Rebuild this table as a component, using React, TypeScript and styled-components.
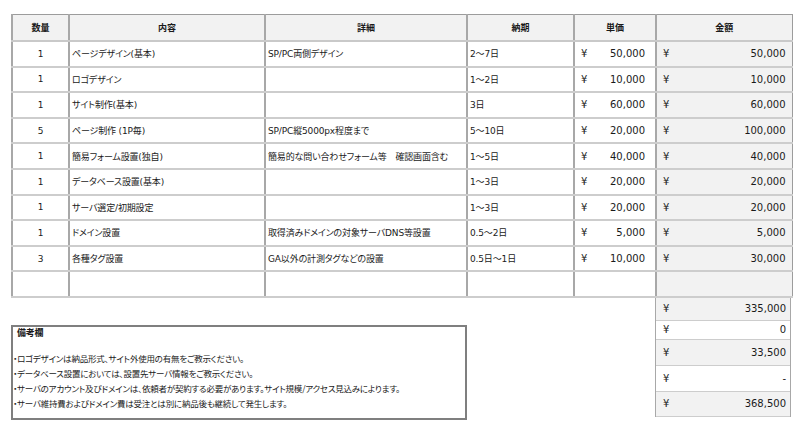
import React from "react";
import styled, { createGlobalStyle } from "styled-components";

const GlobalStyle = createGlobalStyle`
  html, body {
    margin: 0;
    padding: 0;
    background: #ffffff;
  }
  body {
    font-family: "DejaVu Sans", "Noto Sans CJK JP", sans-serif;
    color: #1a1a1a;
  }
`;

const rows = [
  { qty: "1", name: "ページデザイン(基本)", detail: "SP/PC両側デザイン", term: "2〜7日", price: "50,000", amount: "50,000" },
  { qty: "1", name: "ロゴデザイン", detail: "", term: "1〜2日", price: "10,000", amount: "10,000" },
  { qty: "1", name: "サイト制作(基本)", detail: "", term: "3日", price: "60,000", amount: "60,000" },
  { qty: "5", name: "ページ制作 (1P毎)", detail: "SP/PC縦5000px程度まで", term: "5〜10日", price: "20,000", amount: "100,000" },
  { qty: "1", name: "簡易フォーム設置(独自)", detail: "簡易的な問い合わせフォーム等　確認画面含む", term: "1〜5日", price: "40,000", amount: "40,000" },
  { qty: "1", name: "データベース設置(基本)", detail: "", term: "1〜3日", price: "20,000", amount: "20,000" },
  { qty: "1", name: "サーバ選定/初期設定", detail: "", term: "1〜3日", price: "20,000", amount: "20,000" },
  { qty: "1", name: "ドメイン設置", detail: "取得済みドメインの対象サーバDNS等設置", term: "0.5〜2日", price: "5,000", amount: "5,000" },
  { qty: "3", name: "各種タグ設置", detail: "GA以外の計測タグなどの設置", term: "0.5日〜1日", price: "10,000", amount: "30,000" },
  { qty: "", name: "", detail: "", term: "", price: "", amount: "" },
];

const totals = [
  { value: "335,000", height: 23, shade: true },
  { value: "0", height: 19, shade: false },
  { value: "33,500", height: 26, shade: true },
  { value: "-", height: 26, shade: false },
  { value: "368,500", height: 25, shade: true },
];

const notes = [
  "・ロゴデザインは納品形式、サイト外使用の有無をご教示ください。",
  "・データベース設置においては、設置先サーバ情報をご教示ください。",
  "・サーバのアカウント及びドメインは、依頼者が契約する必要があります。サイト規模/アクセス見込みによります。",
  "・サーバ維持費およびドメイン費は受注とは別に納品後も継続して発生します。",
];

const widths = [57, 196, 202, 107, 82, 136];

export default function App() {
  return (
    <>
      <GlobalStyle />
      <Page>
        <Sheet>
          <colgroup>
            {widths.map((w, i) => (
              <col key={i} style={{ width: w }} />
            ))}
          </colgroup>
          <thead>
            <tr>
              <HeadCell>数量</HeadCell>
              <HeadCell>内容</HeadCell>
              <HeadCell>詳細</HeadCell>
              <HeadCell>納期</HeadCell>
              <HeadCell>単価</HeadCell>
              <HeadCell>金額</HeadCell>
            </tr>
          </thead>
          <tbody>
            {rows.map((r, i) => (
              <Row key={i}>
                <Cell $align="center">{r.qty}</Cell>
                <Cell>{r.name}</Cell>
                <Cell>{r.detail}</Cell>
                <Cell>{r.term}</Cell>
                <Cell>
                  {r.price && (
                    <Money $right={8}>
                      <span>¥</span>
                      <span>{r.price}</span>
                    </Money>
                  )}
                </Cell>
                <Cell $shade>
                  {r.amount && (
                    <Money $right={4}>
                      <span>¥</span>
                      <span>{r.amount}</span>
                    </Money>
                  )}
                </Cell>
              </Row>
            ))}
          </tbody>
        </Sheet>

        <Bottom>
          <NoteBox>
            <NoteTitle>備考欄</NoteTitle>
            <NoteList>
              {notes.map((n, i) => (
                <NoteLine key={i}>{n}</NoteLine>
              ))}
            </NoteList>
          </NoteBox>

          <Totals>
            {totals.map((t, i) => (
              <TotalRow key={i} $h={t.height} $shade={t.shade}>
                <span>¥</span>
                <span>{t.value}</span>
              </TotalRow>
            ))}
          </Totals>
        </Bottom>
      </Page>
    </>
  );
}

const Page = styled.div`
  width: 780px;
  padding: 14px 0 0 11px;
`;

const Sheet = styled.table`
  width: 780px;
  table-layout: fixed;
  border-collapse: collapse;
  border: 1px solid #9c9c9c;
`;

const HeadCell = styled.th`
  height: 25px;
  padding: 0;
  background: #f2f2f2;
  border-left: 2px solid #a8a8a8;
  border-bottom: 2px solid #c9c9c9;
  font-family: "Noto Sans CJK JP", sans-serif;
  font-size: 9px;
  font-weight: 700;
  text-align: center;
  color: #1a1a1a;
`;

const Row = styled.tr`
  height: 25.6px;
`;

const Cell = styled.td<{ $align?: string; $shade?: boolean }>`
  padding: 0 2px;
  border-left: 2px solid #a8a8a8;
  border-bottom: 2px solid #cdcdcd;
  background: ${(p) => (p.$shade ? "#f2f2f2" : "#ffffff")};
  text-align: ${(p) => p.$align || "left"};
  font-family: "DejaVu Sans", "Noto Sans CJK JP", sans-serif;
  font-size: 9px;
  letter-spacing: -0.15px;
  font-feature-settings: "palt";
  white-space: nowrap;
  overflow: hidden;
`;

const Money = styled.div<{ $right: number }>`
  display: flex;
  justify-content: space-between;
  padding: 0 ${(p) => p.$right}px 0 4px;
  font-family: "DejaVu Sans", sans-serif;
  font-size: 10px;
  letter-spacing: 0;
`;

const Bottom = styled.div`
  display: flex;
  justify-content: space-between;
  align-items: flex-start;
  width: 780px;
`;

const NoteBox = styled.div`
  box-sizing: border-box;
  width: 456px;
  height: 95px;
  margin-top: 27px;
  border: 2px solid #7f7f7f;
  font-family: "Noto Sans CJK JP", sans-serif;
  font-size: 8.5px;
  letter-spacing: -0.22px;
  font-feature-settings: "palt";
`;

const NoteTitle = styled.div`
  padding-left: 4px;
  line-height: 12px;
  font-weight: 700;
  font-size: 9px;
`;

const NoteList = styled.div`
  margin-top: 12px;
`;

const NoteLine = styled.div`
  line-height: 15px;
  white-space: nowrap;
`;

const Totals = styled.div`
  width: 136px;
  box-sizing: border-box;
  border-left: 1px solid #a8a8a8;
  border-right: 1px solid #a8a8a8;
`;

const TotalRow = styled.div<{ $h: number; $shade: boolean }>`
  box-sizing: border-box;
  height: ${(p) => p.$h}px;
  display: flex;
  justify-content: space-between;
  align-items: center;
  padding: 0 4px 0 7px;
  background: ${(p) => (p.$shade ? "#f2f2f2" : "#ffffff")};
  border-bottom: 1px solid #cdcdcd;
  font-family: "DejaVu Sans", sans-serif;
  font-size: 10px;
`;
